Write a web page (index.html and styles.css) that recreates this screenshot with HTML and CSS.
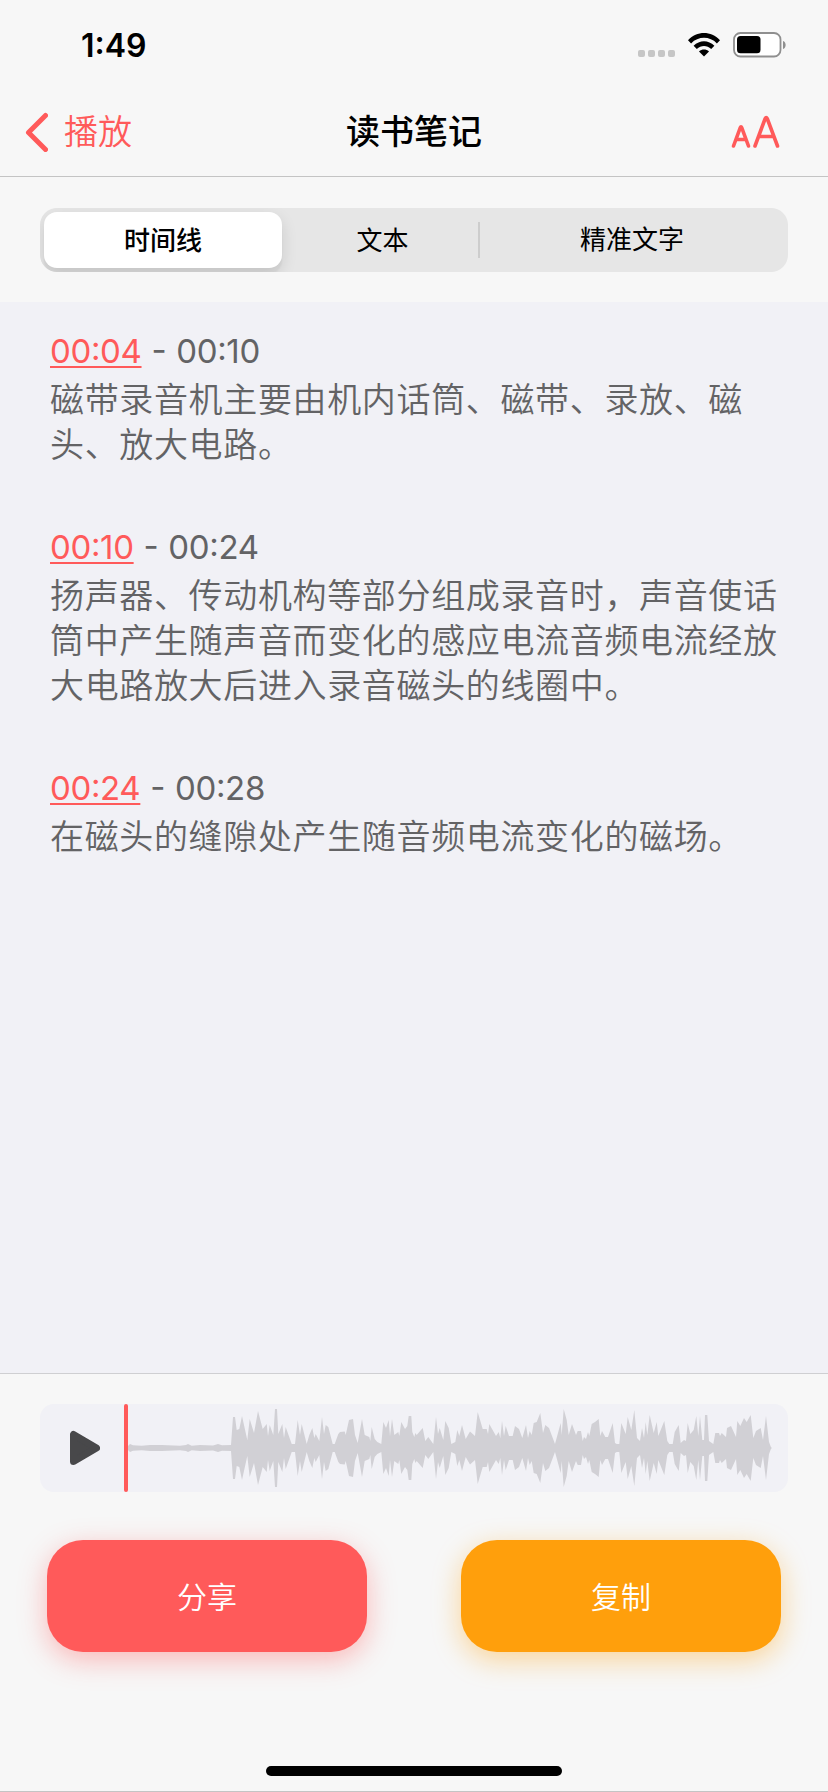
FILE: index.html
```
<!DOCTYPE html>
<html lang="zh-CN">
  <head>
    <meta charset="UTF-8" />
    <meta name="viewport" content="width=device-width, initial-scale=1.0" />
    <title>读书笔记</title>
    <link rel="stylesheet" href="styles.css" />
  </head>

  <body>
    <div class="status-bar">
      <span class="time">1:49</span>
      <div class="status-icons">
        <div class="signal"><i></i><i></i><i></i><i></i></div>
        <svg class="wifi" width="32" height="24" viewBox="0 0 32 24">
          <path d="M0 7.2C9-2.4 23-2.4 32 7.2L28.9 10.4C21.7 3 10.3 3 3.1 10.4Z" />
          <path d="M5.6 12.8C11.6 6.7 20.4 6.7 26.4 12.8L23.2 16C19 12.100 13 12.100 8.800 16Z" />
          <path d="M11 18.400C14 15.900 18 15.900 21 18.400L16 23.600Z" />
        </svg>
        <svg class="battery" width="54" height="26" viewBox="0 0 54 26">
          <rect x="1" y="1" width="46.500" height="23.500" rx="6.500" fill="#fff" stroke="#8f8f8f" stroke-width="1.800" />
          <rect x="4" y="4" width="23.500" height="17.300" rx="3.500" />
          <path d="M50 9C53.500 10 53.500 16 50 17Z" fill="#8f8f8f" />
        </svg>
      </div>
    </div>

    <header class="nav">
      <a class="back" href="#">
        <svg width="24" height="40" viewBox="0 0 24 40">
          <path d="M21.500 3.500L4.500 20.500L21.500 37.500" />
        </svg>
        播放
      </a>
      <h1 class="title">读书笔记</h1>
      <button class="font-size" aria-label="字体大小">
        <svg width="50" height="34" viewBox="0 0 50 34">
          <path d="M2.500 31L9.200 12.800Q10 11 10.800 12.800L17.500 31M5 24.500H15" />
          <path d="M24 31L34.200 3.500Q35.200 1.500 36.200 3.500L46.500 31M28 21.500H42.500" />
        </svg>
      </button>
    </header>

    <div class="tabs">
      <div class="segmented">
        <button class="segment active">时间线</button>
        <button class="segment">文本</button>
        <button class="segment last">精准文字</button>
      </div>
    </div>

    <main class="notes">
      <section class="note">
        <div class="range"><a href="#">00:04</a> - 00:10</div>
        <p>磁带录音机主要由机内话筒、磁带、录放、磁头、放大电路。</p>
      </section>
      <section class="note">
        <div class="range"><a href="#">00:10</a> - 00:24</div>
        <p>扬声器、传动机构等部分组成录音时，声音使话筒中产生随声音而变化的感应电流音频电流经放大电路放大后进入录音磁头的线圈中。</p>
      </section>
      <section class="note">
        <div class="range"><a href="#">00:24</a> - 00:28</div>
        <p>在磁头的缝隙处产生随音频电流变化的磁场。</p>
      </section>
    </main>

    <footer class="footer">
      <div class="player">
        <button class="play" aria-label="播放">
          <svg width="32" height="36" viewBox="0 0 32 36">
            <path d="M5.500 4.500V31.500L28.500 18Z" />
          </svg>
        </button>
        <div class="cursor"></div>
        <!-- upper half of the waveform, mirrored for the lower half -->
        <svg class="wave" width="644" height="88" viewBox="0 -44 644 88">
          <path id="wave" d="M0 1L0 -2L2 -4L5 -2.700L13.700 -2.300L22 -3L33.700 -3L52 -2.300L58 -3L60 -4L63.700 -2.300L72 -3L85 -2.500L90 -4L94 -2.700L103 -3L105 -31L107 -31L108.700 -18L111.300 -19L114 -32L119.300 -8L121.700 -29L126 -15L130 -37L134.700 -19L138.700 -24L140 -12L141.700 -23L145.300 -13L147 -39L149 -39L150.300 -14L154.300 -24L156 -10L157.700 -21L163.700 -4L167 -4L169.700 -28L172 -13L173.700 -24L178.700 -4L181.300 -13L184.300 -20L186.300 -10L187.700 -14L191.300 -7L194 -31L196 -14L197.700 -23L200.300 -21L204.700 -4L206.700 -4L210.300 -14L212 -16L216.700 -16.500L217.700 -13L221 -28L225 -29L227 -13L229.700 -5L234 -29L236.700 -13L241.300 -11L242.300 -7L243.700 -21L246.700 -9L249.300 -6L253.300 -4L255.300 -26L258 -20L260.700 -28L262 -12L264 -29L266.300 -13L270.300 -16L271.300 -12L273.300 -26L277 -19L279.300 -22L280.700 -32L283.300 -32L284.300 -16L286.300 -11L287.300 -15L288.700 -13L294.700 -20L297.300 -7L300.300 -11L305.300 -4L308 -31L310 -14L311.700 -20L315.300 -8L317.300 -27L320.700 -20L323.300 -4L327.300 -6L329.300 -18L331.300 -12L334 -23L337.700 -9L342 -16.500L347 -12L349.700 -36L354.700 -19L358.700 -19L360 -14L361.300 -24L368 -12L370.700 -16L372.300 -10L374 -27L376 -12L377.700 -22L381 -12L384.700 -12L387 -22L391 -19L394.300 -10L398 -23L400 -10L401.700 -17L403.700 -13L405.700 -25L408.700 -26L412.300 -35L415 -15L417.300 -23L421 -20L427 -4L432.700 -25L433.700 -13L435.700 -39L438.700 -28L440.700 -13L444 -24L448 -13L449.700 -17L453 -17L454.700 -7L456 -11L458 -9L460 -16L461.300 -12L463.700 -24L467 -26L470.700 -29L472.300 -12L474 -17L477.300 -11L480 -11L484.700 -25L487 -5L488.700 -4L491.300 -4L493.300 -25L497.700 -14L499.700 -31L503.300 -18L506.300 -38L509 -10L512 -7L514 -20L516 -10L517.700 -26L519.300 -13L521.700 -33L525.700 -15L528.700 -26L530.300 -12L536.300 -27L539.300 -7L541.300 -4L544.700 -4L546.700 -16L550.700 -23L552.700 -5L556 -8L558 -7L559.700 -25L562.300 -14L565.700 -18L568.300 -32L570.300 -12L572 -32L574.300 -8L576 -8L577 -33L579.300 -33L581 -7L585.300 -4L587.300 -15L591 -15L592 -12L593.700 -15L598 -11L599 -20L603 -22L608 -11L609.300 -27L612.300 -22L616 -30L618.700 -26L622.700 -33L625.300 -10L628 -17L632.700 -20L635 -8L638 -32L641 -6L643.300 0V1Z" />
          <use href="#wave" transform="scale(1 -1)" />
        </svg>
      </div>

      <div class="actions">
        <button class="btn share">分享</button>
        <button class="btn copy">复制</button>
      </div>

      <div class="home-indicator"></div>
    </footer>
  </body>
</html>
```
FILE: styles.css
```
* {
  margin: 0;
  padding: 0;
  box-sizing: border-box;
}

body {
  width: 828px;
  height: 1792px;
  display: flex;
  flex-direction: column;
  overflow: hidden;
  font-family: Inter, "Noto Sans CJK SC", sans-serif;
  background-color: #f7f7f7;
  color: #000;
}

button {
  border: none;
  background: none;
  font-family: inherit;
  color: inherit;
}

svg {
  display: block;
}

.status-bar {
  height: 88px;
  display: flex;
  justify-content: space-between;
  padding: 0 41px 0 81px;
}

.time {
  font-size: 32px;
  font-weight: 600;
  line-height: 91px;
  font-feature-settings: "case";
}

.status-icons {
  display: flex;
  align-items: flex-start;
  padding-top: 32px;
}

.signal {
  display: flex;
  gap: 3px;
  padding-top: 18px;
}

.signal i {
  width: 7px;
  height: 7px;
  border-radius: 2px;
  background-color: #c6c6c6;
}

.wifi {
  margin: 1px 13px 0 13px;
}

.nav {
  height: 89px;
  display: grid;
  grid-template-columns: 1fr auto 1fr;
  align-items: center;
  padding: 0 24px;
  border-bottom: 1px solid #c4c4c4;
}

.back {
  display: flex;
  align-items: center;
  gap: 16px;
  font-size: 34px;
  font-weight: 350;
  line-height: 50px;
  color: #ff5a5a;
  text-decoration: none;
}

.back svg path {
  fill: none;
  stroke: #ff5a5a;
  stroke-width: 5;
  stroke-linecap: round;
  stroke-linejoin: round;
}

.title {
  font-size: 34px;
  font-weight: 500;
  line-height: 50px;
}

.font-size {
  justify-self: end;
  margin-right: 23px;
}

.font-size path {
  fill: none;
  stroke: #ff5a5a;
  stroke-width: 3.6;
  stroke-linecap: round;
  stroke-linejoin: round;
}

.tabs {
  height: 125px;
  padding: 31px 40px 0;
}

.segmented {
  height: 64px;
  display: grid;
  grid-template-columns: 238px 196px 1fr;
  padding: 4px;
  border-radius: 17px;
  background-color: #e6e6e6;
  overflow: hidden;
}

.segment {
  padding: 1px 0 0 5px;
  font-size: 26px;
  line-height: 38px;
}

.segment.active {
  padding-left: 0;
  font-weight: 500;
  border-radius: 13px;
  background-color: #fff;
  box-shadow: 0 6px 16px rgba(0, 0, 0, 0.12), 0 6px 2px rgba(0, 0, 0, 0.04);
}

.segment.last {
  align-self: center;
  height: 36px;
  padding: 0;
  line-height: 36px;
  border-left: 2px solid #cdcdcd;
}

.notes {
  flex: 1;
  padding: 26px 48px 0 50px;
  background-color: #f1f1f6;
  border-bottom: 1px solid #cfcfd2;
  color: #636365;
}

.note {
  margin-bottom: 57px;
}

.range {
  height: 49px;
  font-size: 33px;
  line-height: 46px;
  letter-spacing: -0.35px;
  word-spacing: 1px;
  font-feature-settings: "case";
}

.range a {
  color: #ff5a5a;
  text-decoration-thickness: 2px;
  text-underline-offset: 3px;
}

.note p {
  font-size: 34px;
  font-weight: 350;
  line-height: 45px;
  letter-spacing: 0.65px;
}

.footer {
  height: 418px;
  display: flex;
  flex-direction: column;
  padding-top: 30px;
  border-bottom: 1px solid #c4c4c4;
}

.player {
  height: 88px;
  display: flex;
  align-items: center;
  margin: 0 40px;
  border-radius: 14px;
  background-color: #f1f1f6;
}

.play {
  margin-left: 28px;
}

.play path {
  fill: #48484a;
  stroke: #48484a;
  stroke-width: 7;
  stroke-linejoin: round;
}

.cursor {
  width: 4px;
  height: 88px;
  margin-left: 24px;
  border-radius: 2px;
  background-color: #ff5a5a;
}

.wave {
  fill: #d1d0d5;
}

.actions {
  display: flex;
  justify-content: space-between;
  margin-top: 48px;
  padding: 0 47px;
}

.btn {
  width: 320px;
  height: 112px;
  padding-bottom: 3px;
  border-radius: 36px;
  font-size: 30px;
  font-weight: 350;
  color: #fff;
}

.share {
  background-color: #ff5a5a;
  box-shadow: 0 8px 28px rgba(255, 90, 90, 0.4);
}

.copy {
  background-color: #ff9f0c;
  box-shadow: 0 8px 28px rgba(255, 159, 12, 0.4);
}

.home-indicator {
  align-self: center;
  width: 296px;
  height: 10px;
  margin-top: 114px;
  border-radius: 5px;
  background-color: #000;
}
```
